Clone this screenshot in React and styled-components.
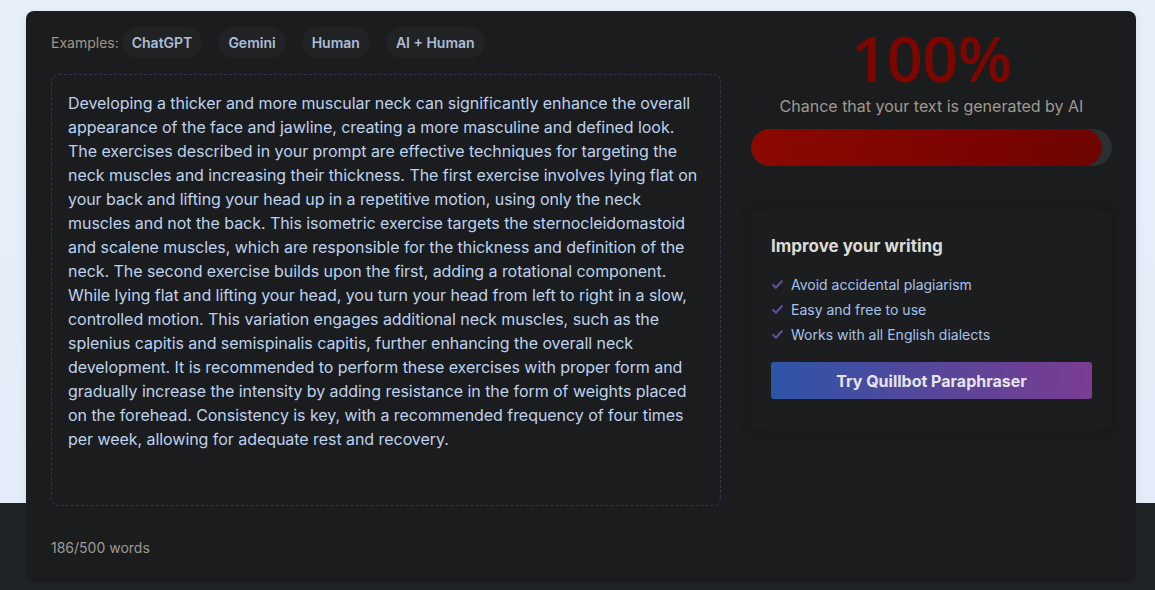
import React from "react";
import styled, { createGlobalStyle } from "styled-components";

const Global = createGlobalStyle`
  html, body { margin: 0; padding: 0; }
  body {
    font-family: Inter, "Noto Sans", sans-serif;
    background: linear-gradient(to bottom, #e7eff9 0, #e3ecf8 503px, #202326 503px, #202326 100%);
    min-height: 590px;
  }
`;

const Page = styled.div`
  padding: 11px 19px 7px 26px;
  height: 590px;
  box-sizing: border-box;
`;

const Card = styled.div`
  background: #1b1c1e;
  border-radius: 8px;
  height: 572px;
  box-sizing: border-box;
  display: grid;
  grid-template-columns: 670px 361px;
  column-gap: 30px;
  padding: 0 24px 0 25px;
  box-shadow: 0 2px 10px rgba(30, 50, 90, 0.08);
`;

const Left = styled.div`
  display: flex;
  flex-direction: column;
`;

const ExamplesRow = styled.div`
  display: flex;
  align-items: center;
  gap: 16px;
  height: 31px;
  margin-top: 16px;
`;

const ExLabel = styled.span`
  font-size: 14px;
  color: #a09682;
  margin-right: -13px;
`;

const Chip = styled.button`
  border: none;
  background: #202224;
  border-radius: 16px;
  height: 31px;
  padding: 0 10px;
  font-family: Inter, sans-serif;
  font-weight: 600;
  font-size: 14px;
  color: #abbdd8;
`;

const TextBox = styled.div`
  margin-top: 16px;
  height: 432px;
  box-sizing: border-box;
  border: 1px dashed #34344c;
  border-radius: 8px;
  padding: 16px 16px;
`;

const Para = styled.p`
  margin: 0;
  font-size: 16px;
  line-height: 24px;
  color: #bed2ee;
  letter-spacing: -0.05px;
`;

const WordCount = styled.div`
  margin-top: 33px;
  font-size: 14px;
  color: #9e9a92;
`;

const Right = styled.div`
  display: flex;
  flex-direction: column;
  align-items: stretch;
`;

const Score = styled.div`
  text-align: center;
  font-family: "Open Sans", Inter, sans-serif;
  font-size: 63px;
  font-weight: 600;
  line-height: 63px;
  height: 63px;
  color: #7c0600;
  margin-top: 15px;
  letter-spacing: -0.5px;
`;

const Caption = styled.div`
  text-align: center;
  font-size: 16px;
  color: #a09a90;
  margin-top: 7px;
`;

const Track = styled.div`
  margin-top: 13px;
  height: 37px;
  border-radius: 19px;
  background: #2b2f32;
  overflow: hidden;
  display: flex;
`;

const Fill = styled.div`
  height: 100%;
  border-radius: 19px;
  background: linear-gradient(to right, #8a0900, #7a0400 70%, #6e0500);
`;

const Promo = styled.div`
  margin-top: 43px;
  background: #1c1d1f;
  border-radius: 12px;
  box-shadow: 0 0 12px rgba(0, 0, 0, 0.22);
  padding: 27px 20px 32px 20px;
`;

const PromoTitle = styled.div`
  font-size: 17px;
  font-weight: 700;
  color: #dedbd6;
`;

const List = styled.ul`
  list-style: none;
  margin: 19px 0 0;
  padding: 0;
  display: flex;
  flex-direction: column;
  gap: 6px;
`;

const Item = styled.li`
  display: flex;
  align-items: center;
  gap: 7px;
  font-size: 14px;
  line-height: 19px;
  color: #a6c2ec;
`;

const CTA = styled.button`
  margin-top: 18px;
  width: 321px;
  height: 37px;
  border: none;
  border-radius: 3px;
  background: linear-gradient(100deg, #2d55a8, #5a4598 55%, #7b3c92);
  color: #e4e4ea;
  font-family: Inter, sans-serif;
  font-weight: 700;
  font-size: 16px;
`;

const Check = () => (
  <svg width="13" height="13" viewBox="0 0 24 24" fill="none" stroke="#5f4d9c" strokeWidth="4" strokeLinecap="round" strokeLinejoin="round">
    <path d="M4 13l5 5L20 6" />
  </svg>
);

const text =
  "Developing a thicker and more muscular neck can significantly enhance the overall appearance of the face and jawline, creating a more masculine and defined look. The exercises described in your prompt are effective techniques for targeting the neck muscles and increasing their thickness. The first exercise involves lying flat on your back and lifting your head up in a repetitive motion, using only the neck muscles and not the back. This isometric exercise targets the sternocleidomastoid and scalene muscles, which are responsible for the thickness and definition of the neck. The second exercise builds upon the first, adding a rotational component. While lying flat and lifting your head, you turn your head from left to right in a slow, controlled motion. This variation engages additional neck muscles, such as the splenius capitis and semispinalis capitis, further enhancing the overall neck development. It is recommended to perform these exercises with proper form and gradually increase the intensity by adding resistance in the form of weights placed on the forehead. Consistency is key, with a recommended frequency of four times per week, allowing for adequate rest and recovery.";

export default function App() {
  return (
    <>
      <Global />
      <Page>
        <Card>
          <Left>
            <ExamplesRow>
              <ExLabel>Examples:</ExLabel>
              <Chip>ChatGPT</Chip>
              <Chip>Gemini</Chip>
              <Chip>Human</Chip>
              <Chip>AI + Human</Chip>
            </ExamplesRow>
            <TextBox>
              <Para>{text}</Para>
            </TextBox>
            <WordCount>186/500 words</WordCount>
          </Left>
          <Right>
            <Score>100%</Score>
            <Caption>Chance that your text is generated by AI</Caption>
            <Track>
              <Fill style={{ width: "97.2%" }} />
            </Track>
            <Promo>
              <PromoTitle>Improve your writing</PromoTitle>
              <List>
                <Item><Check />Avoid accidental plagiarism</Item>
                <Item><Check />Easy and free to use</Item>
                <Item><Check />Works with all English dialects</Item>
              </List>
              <CTA>Try Quillbot Paraphraser</CTA>
            </Promo>
          </Right>
        </Card>
      </Page>
    </>
  );
}
